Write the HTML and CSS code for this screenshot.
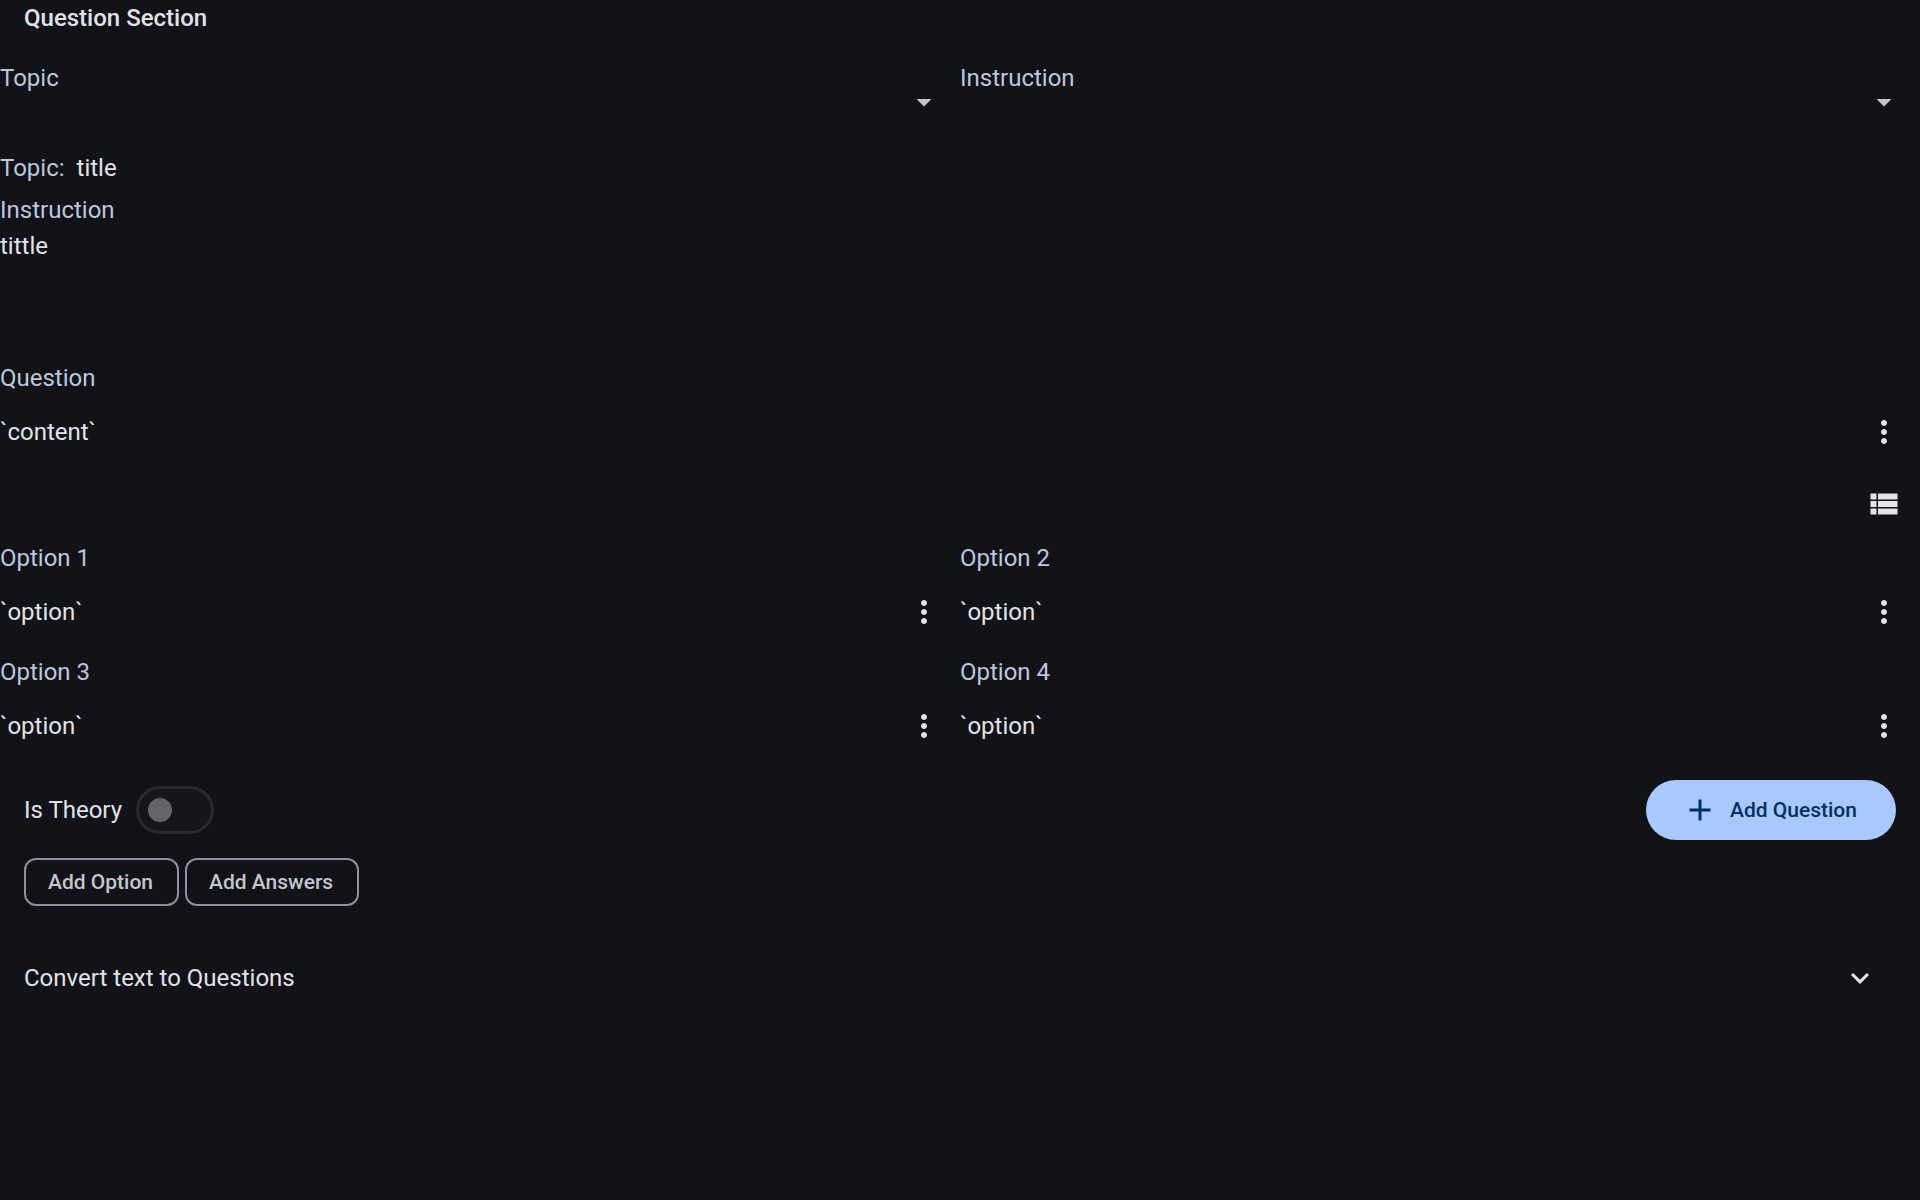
FILE: index.html
```html
<!DOCTYPE html>
<html lang="en">
<head>
<meta charset="utf-8">
<title>Question Section</title>
<link rel="stylesheet" href="styles.css">
</head>
<body>
<svg class="symbols" aria-hidden="true">
  <symbol id="more" viewBox="0 0 24 24"><path d="M12 8c1.1 0 2-.9 2-2s-.9-2-2-2-2 .9-2 2 .9 2 2 2zm0 2c-1.1 0-2 .9-2 2s.9 2 2 2 2-.9 2-2-.9-2-2-2zm0 6c-1.1 0-2 .9-2 2s.9 2 2 2 2-.9 2-2-.9-2-2-2z"/></symbol>
  <symbol id="drop" viewBox="0 0 24 24"><path d="M7 10l5 5 5-5z"/></symbol>
</svg>
<main class="page">
  <h1 class="title">Question Section</h1>

  <div class="columns selects">
    <div class="field">
      <label class="label" for="topic">Topic</label>
      <select class="select" id="topic"><option></option></select>
      <svg class="icon field-arrow" aria-hidden="true"><use href="#drop"/></svg>
    </div>
    <div class="field">
      <label class="label" for="instruction">Instruction</label>
      <select class="select" id="instruction"><option></option></select>
      <svg class="icon field-arrow" aria-hidden="true"><use href="#drop"/></svg>
    </div>
  </div>

  <section class="summary">
    <p class="topic-line"><span class="label">Topic:</span><span>title</span></p>
    <div>
      <p class="label">Instruction</p>
      <p>tittle</p>
    </div>
  </section>

  <section>
    <h2 class="label">Question</h2>
    <div class="content-row"><p>`content`</p><button class="icon-button" aria-label="More"><svg class="icon"><use href="#more"/></svg></button></div>
  </section>

  <div class="toolbar">
    <button class="icon-button" aria-label="List view"><svg class="icon" viewBox="0 0 24 24"><path d="M3 14h4v-4H3v4zm0 5h4v-4H3v4zM3 9h4V5H3v4zm5 5h13v-4H8v4zm0 5h13v-4H8v4zM8 5v4h13V5H8z"/></svg></button>
  </div>

  <div class="columns options">
    <section>
      <h3 class="label">Option 1</h3>
      <div class="content-row"><p>`option`</p><button class="icon-button" aria-label="More"><svg class="icon"><use href="#more"/></svg></button></div>
    </section>
    <section>
      <h3 class="label">Option 2</h3>
      <div class="content-row"><p>`option`</p><button class="icon-button" aria-label="More"><svg class="icon"><use href="#more"/></svg></button></div>
    </section>
    <section>
      <h3 class="label">Option 3</h3>
      <div class="content-row"><p>`option`</p><button class="icon-button" aria-label="More"><svg class="icon"><use href="#more"/></svg></button></div>
    </section>
    <section>
      <h3 class="label">Option 4</h3>
      <div class="content-row"><p>`option`</p><button class="icon-button" aria-label="More"><svg class="icon"><use href="#more"/></svg></button></div>
    </section>
  </div>

  <div class="actions">
    <div class="theory">
      <label class="theory-label" for="theory">Is Theory</label>
      <input class="switch" type="checkbox" role="switch" id="theory" disabled>
    </div>
    <button class="primary"><svg class="icon" viewBox="0 0 24 24" aria-hidden="true"><path d="M19 13h-6v6h-2v-6H5v-2h6V5h2v6h6v2z"/></svg>Add Question</button>
  </div>

  <div class="chips">
    <button class="chip">Add Option</button>
    <button class="chip">Add Answers</button>
  </div>

  <div class="convert">
    <p>Convert text to Questions</p>
    <button class="icon-button" aria-label="Expand"><svg class="icon" viewBox="0 0 24 24"><path d="M7.41 8.59L12 13.17l4.59-4.58L18 10l-6 6-6-6 1.41-1.41z"/></svg></button>
  </div>
</main>
</body>
</html>
```
FILE: styles.css
```css
* { box-sizing: border-box; }

body {
  margin: 0;
  background: #111318;
  color: #e2e2e9;
  font: 400 24px/36px Roboto, sans-serif;
}

h1, h2, h3, p { margin: 0; font: inherit; }

button {
  margin: 0;
  padding: 0;
  border: 0;
  background: none;
  color: inherit;
  font: 500 21px/30px Roboto, sans-serif;
}

.symbols { display: none; }

.icon {
  display: block;
  width: 36px;
  height: 36px;
  flex: none;
  fill: currentColor;
}

.page { display: flex; flex-direction: column; }

.page .title { padding: 0 24px; font-weight: 500; }

.label { color: #bdc7dc; }

.columns { display: grid; grid-template-columns: 1fr 1fr; }

.selects { margin-top: 24px; }

.field { display: grid; height: 84px; }
.field > * { grid-area: 1 / 1; }
.field .label { align-self: start; justify-self: start; }

.select {
  appearance: none;
  width: 100%;
  height: 100%;
  padding: 36px 72px 0 0;
  border: 0;
  background: none;
  color: inherit;
  font: inherit;
}

.field-arrow {
  align-self: center;
  justify-self: end;
  margin-right: 18px;
  color: #c3c6cf;
  pointer-events: none;
}

.summary {
  display: flex;
  flex-direction: column;
  gap: 6px;
  margin: 6px 0 96px;
}

.topic-line { display: flex; gap: 12px; }

.content-row {
  display: flex;
  align-items: center;
  justify-content: space-between;
}

.icon-button {
  display: grid;
  place-items: center;
  width: 72px;
  height: 72px;
}

.toolbar { display: flex; justify-content: flex-end; }

.options { row-gap: 6px; }

.actions {
  display: flex;
  align-items: center;
  justify-content: space-between;
  padding: 18px 24px;
}

.theory { display: flex; align-items: center; gap: 6px; }
.theory-label { min-width: 106px; }

.switch {
  appearance: none;
  display: flex;
  align-items: center;
  width: 78px;
  height: 48px;
  margin: 0;
  padding: 0 9px;
  border: 3px solid #292a2f;
  border-radius: 24px;
  background: #15171b;
}

.switch::before {
  content: "";
  width: 24px;
  height: 24px;
  border-radius: 50%;
  background: #646569;
}

.primary {
  display: flex;
  align-items: center;
  gap: 12px;
  min-width: 250px;
  height: 60px;
  padding: 0 36px;
  border-radius: 30px;
  background: #a8c8ff;
  color: #003062;
}

.chips { display: flex; gap: 6px; padding: 0 24px; }

.chip {
  height: 48px;
  padding: 0 24px 0 22px;
  border: 2px solid #8d9199;
  border-radius: 12px;
  color: #c3c6cf;
}

.convert {
  display: flex;
  align-items: center;
  justify-content: space-between;
  margin-top: 36px;
  padding: 0 24px;
}
```
